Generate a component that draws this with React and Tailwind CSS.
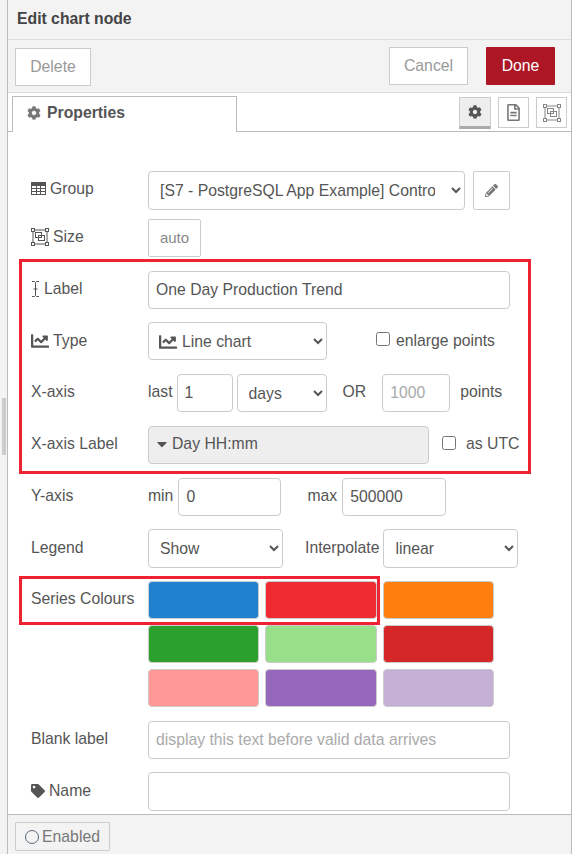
import { FaCog, FaPencilAlt, FaTag, FaChartLine, FaRegFileAlt, FaCaretDown } from "react-icons/fa";

const inputBase =
  "h-[38px] rounded border border-[#ccc] bg-white text-[15.75px] text-[#555] outline-none placeholder:text-[#aaa]";
const selectBase =
  "rounded border border-[#ccc] bg-white text-[15.75px] text-[#555] outline-none";

function SizeIcon({ size = 18 }) {
  return (
    <svg width={size} height={size} viewBox="0 0 18 18" fill="none" stroke="currentColor">
      <rect x="2" y="2" width="14" height="14" strokeWidth="1" />
      <rect x="0.5" y="0.5" width="3" height="3" fill="white" strokeWidth="1" />
      <rect x="14.5" y="0.5" width="3" height="3" fill="white" strokeWidth="1" />
      <rect x="0.5" y="14.5" width="3" height="3" fill="white" strokeWidth="1" />
      <rect x="14.5" y="14.5" width="3" height="3" fill="white" strokeWidth="1" />
      <rect x="4.5" y="4.5" width="6" height="5" strokeWidth="1" />
      <rect x="7.5" y="7.5" width="6" height="5" strokeWidth="1" />
    </svg>
  );
}

function TableIcon() {
  return (
    <svg width="15" height="13" viewBox="0 0 15 13" fill="none" stroke="currentColor" strokeWidth="1">
      <rect x="0.5" y="0.5" width="14" height="12" />
      <rect x="0.5" y="0.5" width="14" height="3" fill="currentColor" />
      <path d="M5.5 3v10M9.5 3v10M0 6.5h15M0 9.5h15" />
    </svg>
  );
}

function CursorIcon() {
  return (
    <svg width="9" height="16" viewBox="0 0 9 16" fill="none" stroke="currentColor" strokeWidth="1">
      <path d="M1 0.5h2.5l1 1 1-1H8M4.5 1.5v13M1 15.5h2.5l1-1 1 1H8M2.5 8h4" />
    </svg>
  );
}

function Row({ mt, h = "h-[38px]", label, icon, pb = "pb-[2px]", children }) {
  return (
    <div className={`flex items-center ${mt} ${h}`}>
      <div className={`flex w-[117px] shrink-0 items-center gap-[4px] ${pb}`}>
        {icon}
        <span>{label}</span>
      </div>
      {children}
    </div>
  );
}

function Swatch({ color }) {
  return <div className={`h-[38px] rounded border border-[#ccc] ${color}`} />;
}

export default function App() {
  return (
    <div
      className="flex h-[854px] w-[573px] overflow-hidden bg-white text-[15.75px] text-[#555]"
      style={{ fontFamily: '"Liberation Sans", Arial, sans-serif' }}
    >
      {/* tray handle strip */}
      <div className="w-[7px] shrink-0 bg-[#f3f3f3]">
        <div className="ml-[2px] mt-[398px] h-[57px] w-[4px] bg-[#ccc]" />
      </div>

      <div className="flex w-[565px] shrink-0 flex-col border-x border-[#bbb]">
        {/* header */}
        <div className="flex h-[40px] items-center border-b border-[#ddd] bg-[#f3f3f3] pb-[2px] pl-[9px] font-bold text-[#444]">
          Edit chart node
        </div>

        {/* toolbar */}
        <div className="flex h-[53px] border-b border-[#ddd] bg-[#f3f3f3] pl-[7px] pr-[16px]">
          <button className="mt-[8px] h-[38px] w-[76px] border border-[#ccc] bg-white text-[#999]">Delete</button>
          <div className="ml-auto mt-[7px] flex gap-[18px]">
            <button className="h-[38px] w-[79px] border border-[#ccc] bg-white text-[#999]">Cancel</button>
            <button className="h-[38px] w-[69px] rounded-[1px] bg-[#ad1625] text-white">Done</button>
          </div>
        </div>

        {/* tabs */}
        <div className="flex h-[39px] items-start border-b border-[#bbb] pl-[4px] pr-[4px] pt-[3px]">
          <div className="flex h-[36px] w-[225px] items-center gap-[6px] border border-b-0 border-[#bbb] bg-white pb-[3px] pl-[14px] font-bold text-[#555]">
            <FaCog className="text-[14px] text-[#777]" />
            Properties
          </div>
          <div className="ml-auto mt-px flex gap-[7px]">
            <div className="flex h-[32px] w-[32px] items-center justify-center border border-[#ccc] border-b-[3px] border-b-[#aaa] bg-[#eee] text-[#555]">
              <FaCog className="text-[14px]" />
            </div>
            <div className="flex h-[31px] w-[31px] items-center justify-center border border-[#ccc] text-[#777]">
              <FaRegFileAlt className="text-[17px]" />
            </div>
            <div className="flex h-[31px] w-[31px] items-center justify-center border border-[#ccc] text-[#888]">
              <SizeIcon />
            </div>
          </div>
        </div>

        {/* form */}
        <div className="relative flex-1 pl-[23px]">
          <Row mt="mt-[39px]" h="h-[39px]" pb="pb-[4px]" label="Group" icon={<TableIcon />}>
            <select className={`${selectBase} h-[39px] w-[317px] pl-[7px] pr-[13px]`} defaultValue="g">
              <option value="g">[S7 - PostgreSQL App Example] Control</option>
            </select>
            <button className="ml-[8px] flex h-[39px] w-[37px] items-center justify-center rounded-[2px] border border-[#ccc] text-[#777]">
              <FaPencilAlt className="text-[13px]" />
            </button>
          </Row>

          <Row mt="mt-[9px]" label="Size" icon={<SizeIcon />}>
            <button className="h-[38px] w-[53px] rounded-[2px] border border-[#ccc] bg-white text-[15px] text-[#888]">auto</button>
          </Row>

          <Row mt="mt-[14px]" label="Label" icon={<CursorIcon />}>
            <input className={`${inputBase} w-[362px] px-[7px]`} defaultValue="One Day Production Trend" />
          </Row>

          <Row mt="mt-[13px]" pb="pb-0" label="Type" icon={<FaChartLine className="text-[18px]" />}>
            <div className="relative">
              <select className={`${selectBase} h-[38px] w-[179px] pl-[29px]`} defaultValue="l">
                <option value="l">Line chart</option>
              </select>
              <FaChartLine className="pointer-events-none absolute left-[11px] top-[11px] text-[18px]" />
            </div>
            <label className="ml-[49px] flex items-center gap-[6px]">
              <input type="checkbox" className="mb-[4px] h-[14px] w-[14px]" />
              enlarge points
            </label>
          </Row>

          <Row mt="mt-[14px]" label="X-axis">
            <span className="pb-[2px]">last</span>
            <input className={`${inputBase} ml-[4px] w-[56px] px-[7px]`} defaultValue="1" />
            <select className={`${selectBase} ml-[4px] h-[38px] w-[90px] pl-[7px]`} defaultValue="d">
              <option value="d">days</option>
            </select>
            <span className="ml-[16px] pb-[2px]">OR</span>
            <input className={`${inputBase} ml-[16px] w-[68px] px-[7px]`} placeholder="1000" />
            <span className="ml-[10px] pb-[2px]">points</span>
          </Row>

          <Row mt="mt-[14px]" label="X-axis Label">
            <div className="flex h-[38px] w-[281px] items-center gap-[2px] rounded border border-[#ccc] bg-[#eee] pb-[2px] pl-[5px]">
              <FaCaretDown className="text-[16px]" />
              Day HH:mm
            </div>
            <label className="ml-[13px] flex items-center gap-[10px] pb-[2px]">
              <input type="checkbox" className="mb-[2px] h-[14px] w-[14px]" />
              as UTC
            </label>
          </Row>

          <Row mt="mt-[14px]" label="Y-axis">
            <span className="pb-[2px]">min</span>
            <input className={`${inputBase} ml-[5px] w-[103px] px-[7px]`} defaultValue="0" />
            <span className="ml-[26px] pb-[2px]">max</span>
            <input className={`${inputBase} ml-[5px] w-[104px] px-[7px]`} defaultValue="500000" />
          </Row>

          <Row mt="mt-[13px]" h="h-[39px]" label="Legend">
            <select className={`${selectBase} h-[39px] w-[135px] pl-[7px]`} defaultValue="s">
              <option value="s">Show</option>
            </select>
            <span className="ml-[22px] pb-[2px]">Interpolate</span>
            <select className={`${selectBase} ml-[4px] h-[39px] w-[135px] pl-[7px]`} defaultValue="l">
              <option value="l">linear</option>
            </select>
          </Row>

          <div className="mt-[13px] flex items-start">
            <div className="flex h-[38px] w-[117px] shrink-0 items-center pb-[2px]">Series Colours</div>
            <div className="grid w-[346px] grid-cols-[111px_112px_111px] gap-x-[6px] gap-y-[6px]">
              <Swatch color="bg-[#1f82cf]" />
              <Swatch color="bg-[#ef2b31]" />
              <Swatch color="bg-[#ff7f0e]" />
              <Swatch color="bg-[#2ca02c]" />
              <Swatch color="bg-[#98df8a]" />
              <Swatch color="bg-[#d62728]" />
              <Swatch color="bg-[#ff9896]" />
              <Swatch color="bg-[#9467bd]" />
              <Swatch color="bg-[#c5b0d5]" />
            </div>
          </div>

          <Row mt="mt-[14px]" label="Blank label">
            <input className={`${inputBase} w-[362px] px-[7px]`} placeholder="display this text before valid data arrives" />
          </Row>

          <Row mt="mt-[13px]" h="h-[39px]" label="Name" icon={<FaTag className="text-[14px]" />}>
            <input className={`${inputBase} !h-[39px] w-[362px] px-[7px]`} />
          </Row>

          {/* red annotation boxes drawn over the form */}
          <div className="pointer-events-none absolute left-[11px] top-[127px] h-[215px] w-[512px] border-[3px] border-[#ee2233]" />
          <div className="pointer-events-none absolute left-[11px] top-[444px] h-[49px] w-[361px] border-[3px] border-[#ee2233]" />
        </div>

        {/* footer */}
        <div className="h-[40px] border-t border-[#bbb] bg-[#f3f3f3] pl-[7px] pt-[7px]">
          <button className="flex h-[29px] w-[95px] items-center justify-center gap-[3px] rounded-[1px] border border-[#ccc] text-[#777]">
            <span className="h-[14px] w-[14px] rounded-full border border-[#5a6a7a]" />
            Enabled
          </button>
        </div>
      </div>
    </div>
  );
}
